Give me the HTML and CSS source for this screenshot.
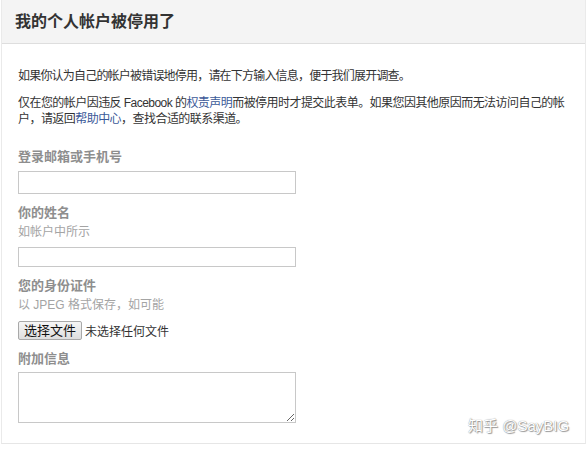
FILE: index.html
```html
<!DOCTYPE html>
<html lang="zh-CN">
<head>
    <meta charset="UTF-8">
    <title>我的个人帐户被停用了</title>
    <link rel="stylesheet" href="styles.css">
</head>
<body>
    <div class="panel">
        <div class="panel-header">我的个人帐户被停用了</div>

        <div class="panel-body">
            <p class="intro">如果你认为自己的帐户被错误地停用，请在下方输入信息，便于我们展开调查。</p>
            <p class="intro second">仅在您的帐户因违反 Facebook 的<a href="#">权责声明</a>而被停用时才提交此表单。如果您因其他原因而无法访问自己的帐户，请返回<a href="#">帮助中心</a>，查找合适的联系渠道。</p>

            <!-- 登录信息 -->
            <label class="field-label first">登录邮箱或手机号</label>
            <input type="text" class="text-input">

            <label class="field-label">你的姓名</label>
            <div class="field-hint">如帐户中所示</div>
            <input type="text" class="text-input short">

            <!-- 证件上传 -->
            <label class="field-label">您的身份证件</label>
            <div class="field-hint">以 JPEG 格式保存，如可能</div>
            <div class="file-row">
                <span class="file-btn">选择文件</span>
                <span class="file-status">未选择任何文件</span>
            </div>

            <label class="field-label">附加信息</label>
            <textarea class="text-area"></textarea>
        </div>
    </div>

    <div class="watermark">知乎 @SayBIG</div>
</body>
</html>
```

FILE: styles.css
```css
body {
    margin: 0;
    background: #fff;
    font-family: "Liberation Sans", "Noto Sans CJK SC", sans-serif;
    color: #333;
}

.panel {
    margin: 0 1px;
    height: 444px;
    border-left: 1px solid #eaeaea;
    border-right: 1px solid #eaeaea;
    border-bottom: 1px solid #e6e6e6;
    box-sizing: border-box;
}

.panel-header {
    height: 43px;
    line-height: 44px;
    padding-left: 13px;
    background: #f4f4f4;
    border-bottom: 1px solid #dedede;
    font-size: 16px;
    font-weight: bold;
    color: #333;
}

.panel-body {
    padding: 0 16px;
    display: flex;
    flex-direction: column;
    align-items: flex-start;
}

.intro {
    margin: 24px 0 0;
    max-width: 550px;
    font-size: 12px;
    line-height: 16px;
    letter-spacing: -0.8px;
    color: #333;
}

.intro.second {
    margin-top: 11px;
    letter-spacing: -0.55px;
    word-break: break-all;
}

.intro a {
    color: #3b5998;
    text-decoration: none;
}

.field-label {
    margin-top: 11px;
    font-size: 13px;
    line-height: 16px;
    font-weight: bold;
    color: #8e8e8e;
}

.field-label.first {
    margin-top: 22px;
}

.field-hint {
    margin-top: 3px;
    font-size: 12px;
    line-height: 16px;
    color: #a4a4a4;
}

.text-input {
    margin: 6px 0 0;
    width: 278px;
    height: 23px;
    box-sizing: border-box;
    border: 1px solid #c8c8c8;
    background: #fff;
}

.text-input.short {
    margin-top: 7px;
    height: 20px;
}

.file-row {
    margin-top: 8px;
    display: flex;
    align-items: center;
    gap: 3px;
}

.file-btn {
    display: inline-block;
    height: 19px;
    line-height: 18px;
    padding: 0 5px;
    box-sizing: border-box;
    border: 1px solid #a9a9a9;
    border-radius: 2px;
    background: linear-gradient(#f6f6f6, #dedede);
    font-size: 13px;
    color: #111;
}

.file-status {
    font-size: 12px;
    color: #333;
}

.text-area {
    margin: 5px 0 0;
    width: 278px;
    height: 51px;
    box-sizing: border-box;
    border: 1px solid #c8c8c8;
    resize: vertical;
}

.watermark {
    position: absolute;
    left: 468px;
    top: 414px;
    font-size: 15px;
    color: #fff;
    text-shadow: 0 0 1px #777, 1px 1px 1px #999;
}
```
